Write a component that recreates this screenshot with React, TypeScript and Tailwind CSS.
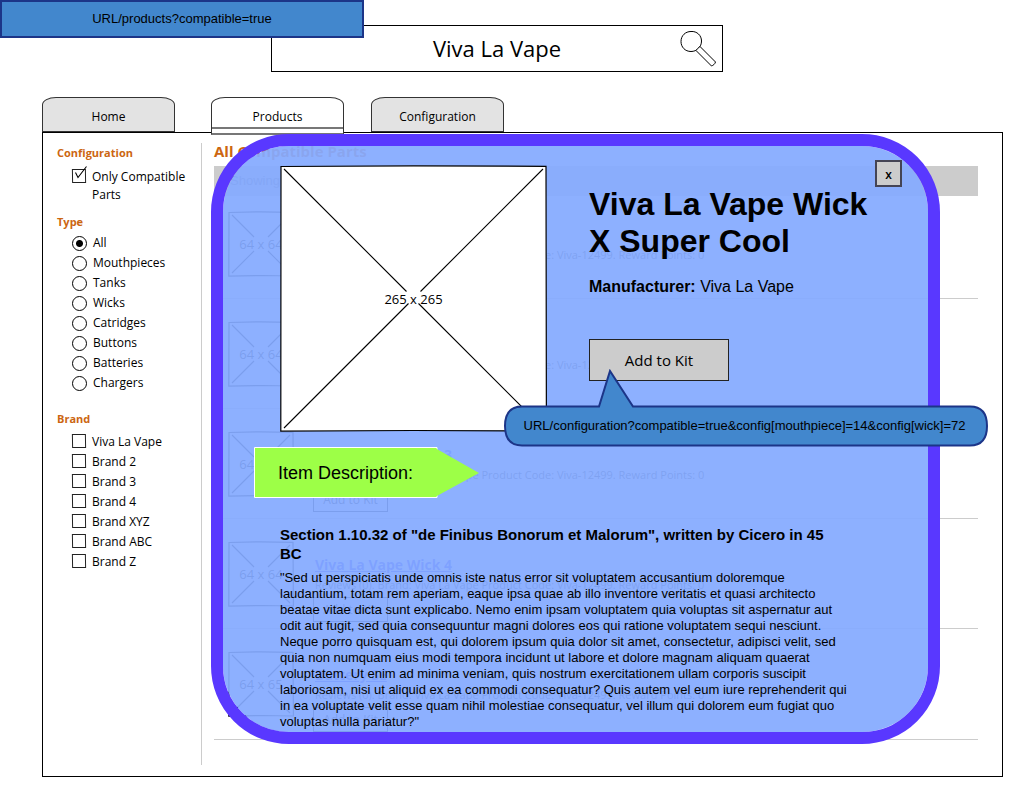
import React from "react";

const SKETCH = "font-['Comic_Sans_MS','Open_Sans',sans-serif]";

function Placeholder({ label, className, box, fontSize }: { label: string; className: string; box: number; fontSize: number }) {
  const c = box / 2;
  const above = 7;
  const below = box > 100 ? 5 : 7;
  const inset = 4;
  return (
    <svg viewBox={`0 0 ${box} ${box}`} className={className} role="img" aria-label={label} fill="none" stroke="black">
      <path d={`M1 1.5 L${c} .8 L${box - 1} 1.3 L${box - 0.6} ${box - 1} L${c} ${box - 1.5} L.8 ${box - 0.8} Z`} fill="white" strokeWidth="1.2" />
      <path
        strokeWidth="1.1"
        d={`M${inset} ${inset} L${c - above} ${c - above} M${box - inset} ${inset} L${c + above} ${c - above} M${inset} ${box - inset} L${c - below} ${c + below} M${box - inset} ${box - inset} L${c + below} ${c + below}`}
      />
      <text x={c} y={c + fontSize * 0.42} textAnchor="middle" fontSize={fontSize} fill="black" stroke="none" className={SKETCH}>
        {label}
      </text>
    </svg>
  );
}

const TYPES = ["All", "Mouthpieces", "Tanks", "Wicks", "Catridges", "Buttons", "Batteries", "Chargers"];
const BRANDS = ["Viva La Vape", "Brand 2", "Brand 3", "Brand 4", "Brand XYZ", "Brand ABC", "Brand Z"];
const PRODUCTS = [
  { name: "Viva La Vape Wick 1", size: "64 x 64" },
  { name: "Viva La Vape Wick 2", size: "64 x 64" },
  { name: "Viva La Vape Wick 3", size: "64 x 64" },
  { name: "Viva La Vape Wick 4", size: "64 x 64" },
  { name: "Battery SE", size: "64 x 65" },
];

function Tab({ label, active = false }: { label: string; active?: boolean }) {
  return (
    <a
      href={`#${label.toLowerCase()}`}
      className={
        active
          ? "relative z-10 -mb-[3px] flex h-[38px] w-[133px] flex-col rounded-t-[14px_8px] border border-b-2 border-[#333] border-b-[#777] bg-white text-center leading-[37px]"
          : "h-[35px] w-[133px] rounded-t-[14px_8px] border border-[#333] bg-[#e3e3e3] text-center leading-[37px]"
      }
    >
      <span className={active ? "block h-[29px]" : ""}>{label}</span>
      {active && <span className="block border-t-2 border-[#777]" />}
    </a>
  );
}

function TickBox({ label, checked = false }: { label: string; checked?: boolean }) {
  return (
    <label className="flex items-start gap-[6px] leading-[18px]">
      <span className="relative mt-[1px] block h-[14px] w-[14px] shrink-0">
        <input type="checkbox" defaultChecked={checked} className="block h-[14px] w-[14px] -rotate-1 appearance-none border border-[#222] bg-white" />
        {checked && (
          <svg viewBox="0 0 16 18" className="pointer-events-none absolute -top-[3px] left-0 h-[18px] w-[16px]" fill="none" stroke="black" strokeWidth="1.1">
            <path d="M3.500 6.500 L6 11.500 L14.500 .5" />
          </svg>
        )}
      </span>
      <span>{label}</span>
    </label>
  );
}

function Sidebar() {
  return (
    <aside className="mt-[10px] mb-[11px] w-[159px] shrink-0 border-r border-[#ccc] pl-[14px] text-[12px]">
      <h2 className="pt-[1px] text-[11px] font-bold leading-[18px] text-[#cc6611]">Configuration</h2>
      <div className="mt-[6px] pl-[15px]">
        <TickBox label="Only Compatible Parts" checked />
      </div>
      <fieldset className="mt-[8px]">
        <legend className="text-[11px] font-bold leading-[20px] text-[#cc6611]">Type</legend>
        <div className="pl-[15px] pt-[1px]">
          {TYPES.map((t, i) => (
            <label key={t} className="flex h-[20px] items-center gap-[6px]">
              <input
                type="radio"
                name="type"
                defaultChecked={i === 0}
                className="size-[15px] shrink-0 appearance-none rounded-full border border-black bg-white checked:bg-[radial-gradient(circle,black_3px,white_4px)]"
              />
              <span>{t}</span>
            </label>
          ))}
        </div>
      </fieldset>
      <fieldset className="mt-[16px]">
        <legend className="text-[11px] font-bold leading-[20px] text-[#cc6611]">Brand</legend>
        <div className="flex flex-col gap-[2px] pl-[15px] pt-[4px]">
          {BRANDS.map((b) => (
            <TickBox key={b} label={b} />
          ))}
        </div>
      </fieldset>
    </aside>
  );
}

function ProductList() {
  return (
    <main className="min-w-0 flex-1 pb-[36px] pl-[12px] pr-[24px] pt-[9px]">
      <h1 className="text-[15px] font-bold leading-[18px] text-[#cc6611]">All Compatible Parts</h1>
      <p className="mt-[6px] bg-[#ccc] pl-[16px] font-[Liberation_Sans,sans-serif] text-[13px] leading-[30px] text-[#777]">Showing</p>
      <ul className="-mt-[7px]">
        {PRODUCTS.map((p) => (
          <li key={p.name} className="flex h-[110px] gap-[19px] border-b border-[#ccc] pl-[14px] pt-[22px] text-[12px] last:h-[111px]">
            <Placeholder label={p.size} box={66} fontSize={13} className="size-[66px] shrink-0" />
            <div className="whitespace-nowrap pt-[14px]">
              <a href="#product" className="block w-max pl-[2px] text-[14px] font-bold leading-[20px] text-[#3333ff] underline">{p.name}</a>
              <p className="pl-[2px] text-[11px] leading-[20px] text-[#333]">Reviews (0). Brand: Viva La Vape Product Code: Viva-12499. Reward Points: 0</p>
              <button className="mt-[2px] block h-[25px] w-[75px] border border-black leading-[20px]">Add to Kit</button>
            </div>
          </li>
        ))}
      </ul>
    </main>
  );
}

function ProductDialog() {
  return (
    <section
      role="dialog"
      aria-label="Viva La Vape Wick X Super Cool"
      className="absolute left-[211px] right-[84px] top-[134px] z-20 rounded-[78px] border-[12px] border-[#5938ff] bg-[rgba(132,170,255,0.93)] bg-clip-padding pb-[2px] pl-[57px] pr-[26px] pt-[14px] font-[Liberation_Sans,sans-serif] text-black"
    >
      <div className="flex items-start">
        <Placeholder label="265 x 265" box={267} fontSize={13} className="mt-[5px] size-[267px] shrink-0" />
        <div className="ml-[42px] w-[286px] shrink-0 pt-[26px]">
          <h2 className="text-[32px] font-bold leading-[37px]">Viva La Vape Wick X Super Cool</h2>
          <p className="mt-[16px] text-[16px] leading-[22px]">
            <b>Manufacturer:</b> Viva La Vape
          </p>
          <button className={`mt-[41px] block h-[42px] w-[140px] border border-[#222] bg-[#ccc] text-[15px] ${SKETCH}`}>Add to Kit</button>
        </div>
        <button aria-label="Close" className={`ml-auto h-[27px] w-[27px] shrink-0 border-2 border-[#445] bg-[#ccc] text-[12px] font-semibold leading-[26px] ${SKETCH}`}>
          x
        </button>
      </div>
      <div className="relative -ml-[26px] mt-[15px] h-[51px] w-[226px]">
        <svg viewBox="0 0 226 51" className="absolute inset-0 h-[51px] w-[226px]">
          <path d="M183 3 V.5 H.5 V50.5 H183 V48" fill="#9dff47" stroke="white" />
          <path d="M181 1 L225 26 L181 50 Z" fill="#9dff47" />
        </svg>
        <h3 className="relative pl-[24px] text-[18px] leading-[52px]">Item Description:</h3>
      </div>
      <h4 className="mt-[27px] w-[560px] text-[15px] font-bold leading-[19px]">
        Section 1.10.32 of "de Finibus Bonorum et Malorum", written by Cicero in 45 BC
      </h4>
      <p className="mt-[7px] w-[572px] text-[13px] leading-[16px]">
        "Sed ut perspiciatis unde omnis iste natus error sit voluptatem accusantium doloremque laudantium, totam rem aperiam, eaque ipsa
        quae ab illo inventore veritatis et quasi architecto beatae vitae dicta sunt explicabo. Nemo enim ipsam voluptatem quia voluptas
        sit aspernatur aut odit aut fugit, sed quia consequuntur magni dolores eos qui ratione voluptatem sequi nesciunt. Neque porro
        quisquam est, qui dolorem ipsum quia dolor sit amet, consectetur, adipisci velit, sed quia non numquam eius modi tempora incidunt
        ut labore et dolore magnam aliquam quaerat voluptatem. Ut enim ad minima veniam, quis nostrum exercitationem ullam corporis
        suscipit laboriosam, nisi ut aliquid ex ea commodi consequatur? Quis autem vel eum iure reprehenderit qui in ea voluptate velit
        esse quam nihil molestiae consequatur, vel illum qui dolorem eum fugiat quo voluptas nulla pariatur?"
      </p>
      <div className="absolute left-[281px] top-[223px] h-[78px] w-[485px]">
        <svg viewBox="0 0 485 78" className="absolute inset-0 h-[78px] w-[485px]">
          <path
            d="M18 37.500 H95 L106 2 L129 37.500 H466 Q483 37.500 483 57 Q483 76.500 466 76.500 H18 Q1 76.500 1 57 Q1 37.500 18 37.500 Z"
            fill="#4287cd"
            stroke="#1c3588"
            strokeWidth="2"
          />
        </svg>
        <p className="relative whitespace-nowrap pr-[4px] pt-[38px] text-center text-[13px] leading-[38px]">
          URL/configuration?compatible=true&amp;config[mouthpiece]=14&amp;config[wick]=72
        </p>
      </div>
    </section>
  );
}

export default function App() {
  return (
    <div className={`relative min-h-screen bg-white pb-[23px] pl-[42px] pr-[21px] pt-[25px] text-black ${SKETCH}`}>
      <div className="absolute left-0 top-0 z-20 w-[364px] border-2 border-[#1c3588] bg-[#4287cd] text-center font-[Liberation_Sans,sans-serif] text-[13px] leading-[34px]">
        URL/products?compatible=true
      </div>
      <header className="relative ml-[229px] flex h-[47px] w-[452px] border border-black">
        <input aria-label="Search" defaultValue="Viva La Vape" className="min-w-0 flex-1 text-center text-[22px] outline-none" />
        <button aria-label="Search products" className="absolute right-[4px] top-[4px]">
          <svg viewBox="0 0 38 38" className="size-[38px]" fill="white" stroke="black" strokeWidth="1">
            <path d="M11 1.500 C17 1 21.500 5.500 21.500 11 C21.500 17 17 21.500 11 21.500 C5 21.500 1 17 1 11.500 C1 5.500 5.500 1.500 11 1.500 Z" />
            <path d="M20 16.500 L35.500 32 C35 34 33 35.500 31.500 36 L16 20.500 C17 19 18.500 17.500 20 16.500 Z" />
          </svg>
        </button>
      </header>
      <nav className="mt-[25px] flex text-[12px]">
        <Tab label="Home" />
        <span className="w-[36px]" />
        <Tab label="Products" active />
        <span className="w-[27px]" />
        <Tab label="Configuration" />
      </nav>
      <div className="flex border border-black">
        <Sidebar />
        <ProductList />
      </div>
      <ProductDialog />
    </div>
  );
}
